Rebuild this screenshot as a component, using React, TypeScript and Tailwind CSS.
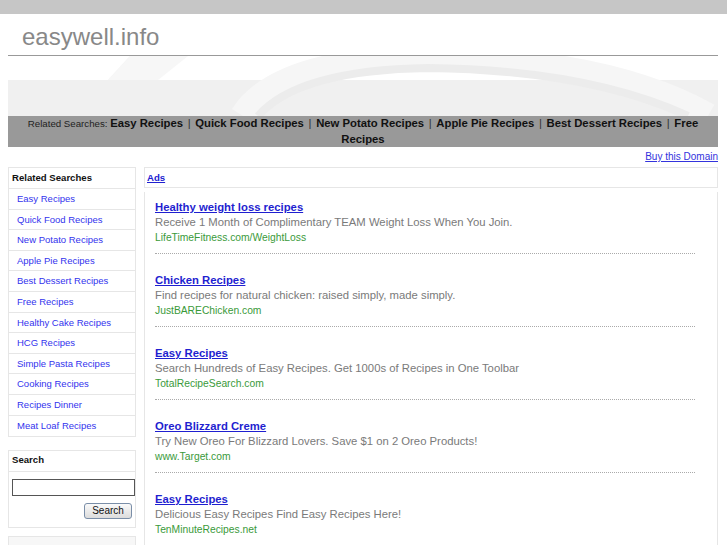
import React from 'react';

const related = [
  'Easy Recipes',
  'Quick Food Recipes',
  'New Potato Recipes',
  'Apple Pie Recipes',
  'Best Dessert Recipes',
  'Free Recipes',
  'Healthy Cake Recipes',
  'HCG Recipes',
  'Simple Pasta Recipes',
  'Cooking Recipes',
  'Recipes Dinner',
  'Meat Loaf Recipes',
];

const topLinks = ['Easy Recipes', 'Quick Food Recipes', 'New Potato Recipes', 'Apple Pie Recipes', 'Best Dessert Recipes', 'Free Recipes'];

const ads = [
  { title: 'Healthy weight loss recipes', desc: 'Receive 1 Month of Complimentary TEAM Weight Loss When You Join.', url: 'LifeTimeFitness.com/WeightLoss' },
  { title: 'Chicken Recipes', desc: 'Find recipes for natural chicken: raised simply, made simply.', url: 'JustBAREChicken.com' },
  { title: 'Easy Recipes', desc: 'Search Hundreds of Easy Recipes. Get 1000s of Recipes in One Toolbar', url: 'TotalRecipeSearch.com' },
  { title: 'Oreo Blizzard Creme', desc: 'Try New Oreo For Blizzard Lovers. Save $1 on 2 Oreo Products!', url: 'www.Target.com' },
  { title: 'Easy Recipes', desc: 'Delicious Easy Recipes Find Easy Recipes Here!', url: 'TenMinuteRecipes.net' },
];

const Swoosh: React.FC = () => (
  <svg width="710" height="60" viewBox="0 0 710 60" className="block">
    <rect x="0" y="24" width="710" height="36" fill="#f0f0f0" />
    <path d="M0 24 L100 24 L122 0 L135 0 L112 24 L0 24 Z" fill="#f4f4f4" />
    <path d="M100 24 L122 0 L180 0 L150 24 Z" fill="#f7f7f7" />
    <path d="M235 60 Q270 4 420 2 Q600 4 700 60" fill="none" stroke="#f6f6f6" strokeWidth="26" />
    <path d="M250 60 Q290 14 420 12 Q580 14 680 60" fill="none" stroke="#ececec" strokeWidth="8" />
  </svg>
);

const App: React.FC = () => {
  return (
    <div className="min-h-[545px] bg-white font-['Liberation_Sans',Arial,sans-serif] overflow-hidden">
      {/* top strip */}
      <div className="h-[14px] bg-[#c6c6c6]" />

      <div className="ml-[8px] w-[710px]">
        {/* site title */}
        <div className="h-[42px] border-b border-[#999] pl-[14px] pt-[9px] text-[24px] leading-[28px] text-[#888]">
          easywell.info
        </div>
        <Swoosh />

        {/* related bar */}
        <div className="h-[31px] bg-[#999] px-[6px] text-center text-[11.3px] leading-[15.5px] text-[#111]">
          <span className="text-[9.7px] text-[#222]">Related Searches: </span>
          {topLinks.map((l, i) => (
            <React.Fragment key={l}>
              {l.split(' ').map((w, j) => (
                <React.Fragment key={j}>
                  {j > 0 && ' '}
                  <span className="font-bold">{w}</span>
                </React.Fragment>
              ))}
              {i < topLinks.length - 1 && (
                <>
                  {' '}
                  <span className="px-[1.5px] text-[#333]">|</span>{' '}
                </>
              )}
            </React.Fragment>
          ))}
        </div>

        <div className="h-[20px] text-right text-[10px] leading-[20px]">
          <span className="text-[#3333dd] underline">Buy this Domain</span>
        </div>

        <div className="flex gap-[8px]">
          {/* sidebar */}
          <div className="w-[128px] shrink-0">
            <div className="border border-[#e6e6e6]">
              <div className="h-[21px] border-b border-[#e6e6e6] pl-[3px] text-[9.6px] font-bold leading-[20px] text-[#111]">
                Related Searches
              </div>
              {related.map((r, i) => (
                <div
                  key={r}
                  className={`h-[20.6px] pl-[8px] text-[9.5px] leading-[20px] text-[#3333ee] ${i < related.length - 1 ? 'border-b border-[#e6e6e6]' : ''}`}
                >
                  {r}
                </div>
              ))}
            </div>

            <div className="mt-[13px] border border-[#e6e6e6]">
              <div className="h-[21px] border-b border-[#e6e6e6] pl-[3px] text-[9.6px] font-bold leading-[18px] text-[#111]">
                Search
              </div>
              <div className="px-[3px] pb-[8px] pt-[7px]">
                <input className="block h-[17px] w-[123px] border border-[#555] bg-white" />
                <div className="mt-[7px] flex justify-end">
                  <button className="h-[16px] w-[48px] rounded-[3px] border border-[#7a8ea8] bg-gradient-to-b from-[#fafafa] to-[#dcdcdc] text-[10px] leading-[14px] text-[#111]">
                    Search
                  </button>
                </div>
              </div>
            </div>

            <div className="mt-[8px] h-[30px] border border-[#e6e6e6] bg-[#f7f7f7]" />
          </div>

          {/* main */}
          <div className="flex-1">
            <div className="h-[21px] border border-[#e6e6e6] pl-[2px] text-[9.6px] font-bold leading-[19px]">
              <span className="text-[#2020d0] underline">Ads</span>
            </div>
            <div className="mt-[4px] border-x border-[#e6e6e6] pl-[10px] pr-[22px] pt-[8px]">
              {ads.map((a, i) => (
                <div key={i} className="mb-[19px] border-b border-dotted border-[#aaa] pb-[8px]">
                  <div className="text-[11.3px] font-bold leading-[15px] text-[#1f1fd0] underline">{a.title}</div>
                  <div className="text-[11.3px] leading-[15px] text-[#7a7a7a]">{a.desc}</div>
                  <div className="text-[10.3px] leading-[15px] text-[#3a9a3a]">{a.url}</div>
                </div>
              ))}
            </div>
          </div>
        </div>
      </div>
    </div>
  );
};

export default App;
